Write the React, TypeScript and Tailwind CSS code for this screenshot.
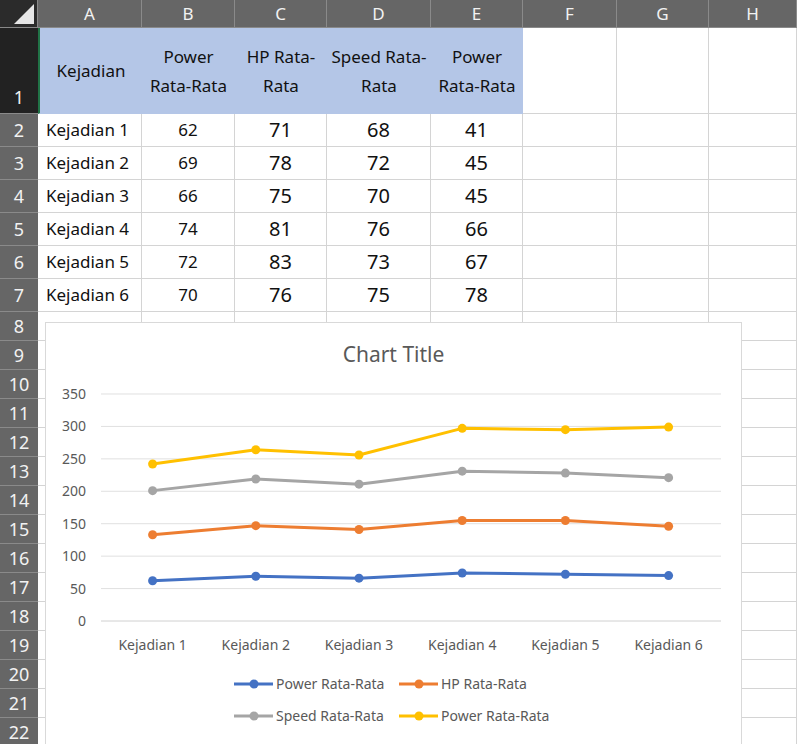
const cols = ["A", "B", "C", "D", "E", "F", "G", "H"];
const widths = [104, 93, 92, 104, 92, 94, 92, 88];
const rows = [
  ["Kejadian 1", 62, 71, 68, 41],
  ["Kejadian 2", 69, 78, 72, 45],
  ["Kejadian 3", 66, 75, 70, 45],
  ["Kejadian 4", 74, 81, 76, 66],
  ["Kejadian 5", 72, 83, 73, 67],
  ["Kejadian 6", 70, 76, 75, 78],
];
const heads = ["Kejadian", "Power Rata-Rata", "HP Rata-Rata", "Speed Rata-Rata", "Power Rata-Rata"];
const series = [
  { name: "Power Rata-Rata", color: "#4472c4" },
  { name: "HP Rata-Rata", color: "#ed7d31" },
  { name: "Speed Rata-Rata", color: "#a5a5a5" },
  { name: "Power Rata-Rata", color: "#ffc000" },
];

const yOf = (v: number) => 298 - v * 0.6486;
const xOf = (i: number) => 106.6 + i * 103.2;

function Chart() {
  const stacks = rows.map((r) => {
    let acc = 0;
    return [1, 2, 3, 4].map((k) => (acc += r[k] as number));
  });
  return (
    <div className="absolute left-[45px] top-[322px] w-[697px] h-[430px] bg-white border border-[#d9d9d9]">
      <div className="text-center text-[21px] text-[#595959] mt-[16px]">Chart Title</div>
      <svg className="absolute left-0 top-0" width="697" height="430">
        {[0, 50, 100, 150, 200, 250, 300, 350].map((v) => (
          <g key={v}>
            <line x1="55" x2="675" y1={yOf(v)} y2={yOf(v)} stroke={v === 0 ? "#d0d0d0" : "#e0e0e0"} />
            <text x="40" y={yOf(v) + 5} textAnchor="end" fontSize="14" fill="#595959">{v}</text>
          </g>
        ))}
        {rows.map((r, i) => (
          <text key={i} x={xOf(i)} y="327" textAnchor="middle" fontSize="14" fill="#595959">{r[0]}</text>
        ))}
        {series.map((s, k) => (
          <g key={k}>
            <polyline
              fill="none"
              stroke={s.color}
              strokeWidth="3"
              strokeLinejoin="round"
              points={stacks.map((st, i) => `${xOf(i)},${yOf(st[k])}`).join(" ")}
            />
            {stacks.map((st, i) => (
              <circle key={i} cx={xOf(i)} cy={yOf(st[k])} r="4.5" fill={s.color} />
            ))}
          </g>
        ))}
        {series.map((s, k) => {
          const lx = k % 2 === 0 ? 188 : 353;
          const ly = k < 2 ? 361 : 393;
          return (
            <g key={k}>
              <line x1={lx} x2={lx + 39} y1={ly} y2={ly} stroke={s.color} strokeWidth="3" />
              <circle cx={lx + 20} cy={ly} r="4.5" fill={s.color} />
              <text x={lx + 42} y={ly + 5} fontSize="14" fill="#595959">{s.name}</text>
            </g>
          );
        })}
      </svg>
    </div>
  );
}

export default function App() {
  const rowHeights = [86, 33, 33, 33, 33, 33, 33, ...Array(15).fill(29)];
  return (
    <div className="relative w-[797px] h-[744px] overflow-hidden bg-white" style={{ fontFamily: '"Noto Sans", sans-serif' }}>
      <div className="grid" style={{ gridTemplateColumns: `38px ${widths.map((w) => w + "px").join(" ")}` }}>
        <div className="h-[28px] bg-[#2b2b2b] border-r border-b border-[#888] relative">
          <div className="absolute right-[3px] bottom-[3px] w-0 h-0 border-l-[20px] border-l-transparent border-b-[20px] border-b-[#e6e6e6]" />
        </div>
        {cols.map((c) => (
          <div key={c} className="h-[28px] bg-[#666] text-[#f2f2f2] text-[17px] flex items-center justify-center border-r border-b border-[#8a8a8a]">{c}</div>
        ))}
        {rowHeights.map((h, r) => (
          <div key={r} className="contents">
            <div
              className={`${r === 0 ? "bg-[#222] items-end pb-[2px]" : "bg-[#666] items-center"} text-[#f2f2f2] text-[18px] flex justify-center border-b border-[#8a8a8a]`}
              style={{ height: h }}
            >
              {r + 1}
            </div>
            {cols.map((c, ci) => {
              if (r === 0 && ci < 5) {
                return (
                  <div key={c} className={`bg-[#b4c6e7] flex items-center justify-center text-center text-[17px] leading-[29px] text-[#111] px-1 border-b border-[#b4c6e7] ${ci === 0 ? "border-l-2 border-l-[#217346]" : ""}`}>
                    {heads[ci]}
                  </div>
                );
              }
              const data = r >= 1 && r <= 6 ? rows[r - 1] : null;
              const v = data && ci < 5 ? data[ci] : "";
              return (
                <div
                  key={c}
                  className={`border-r border-b border-[#d4d4d4] flex items-center text-[#111] ${ci === 0 ? "pl-[8px] text-[17px]" : ci === 1 ? "justify-center text-[17px]" : "justify-center text-[20px]"}`}
                >
                  {v}
                </div>
              );
            })}
          </div>
        ))}
      </div>
      <Chart />
    </div>
  );
}
